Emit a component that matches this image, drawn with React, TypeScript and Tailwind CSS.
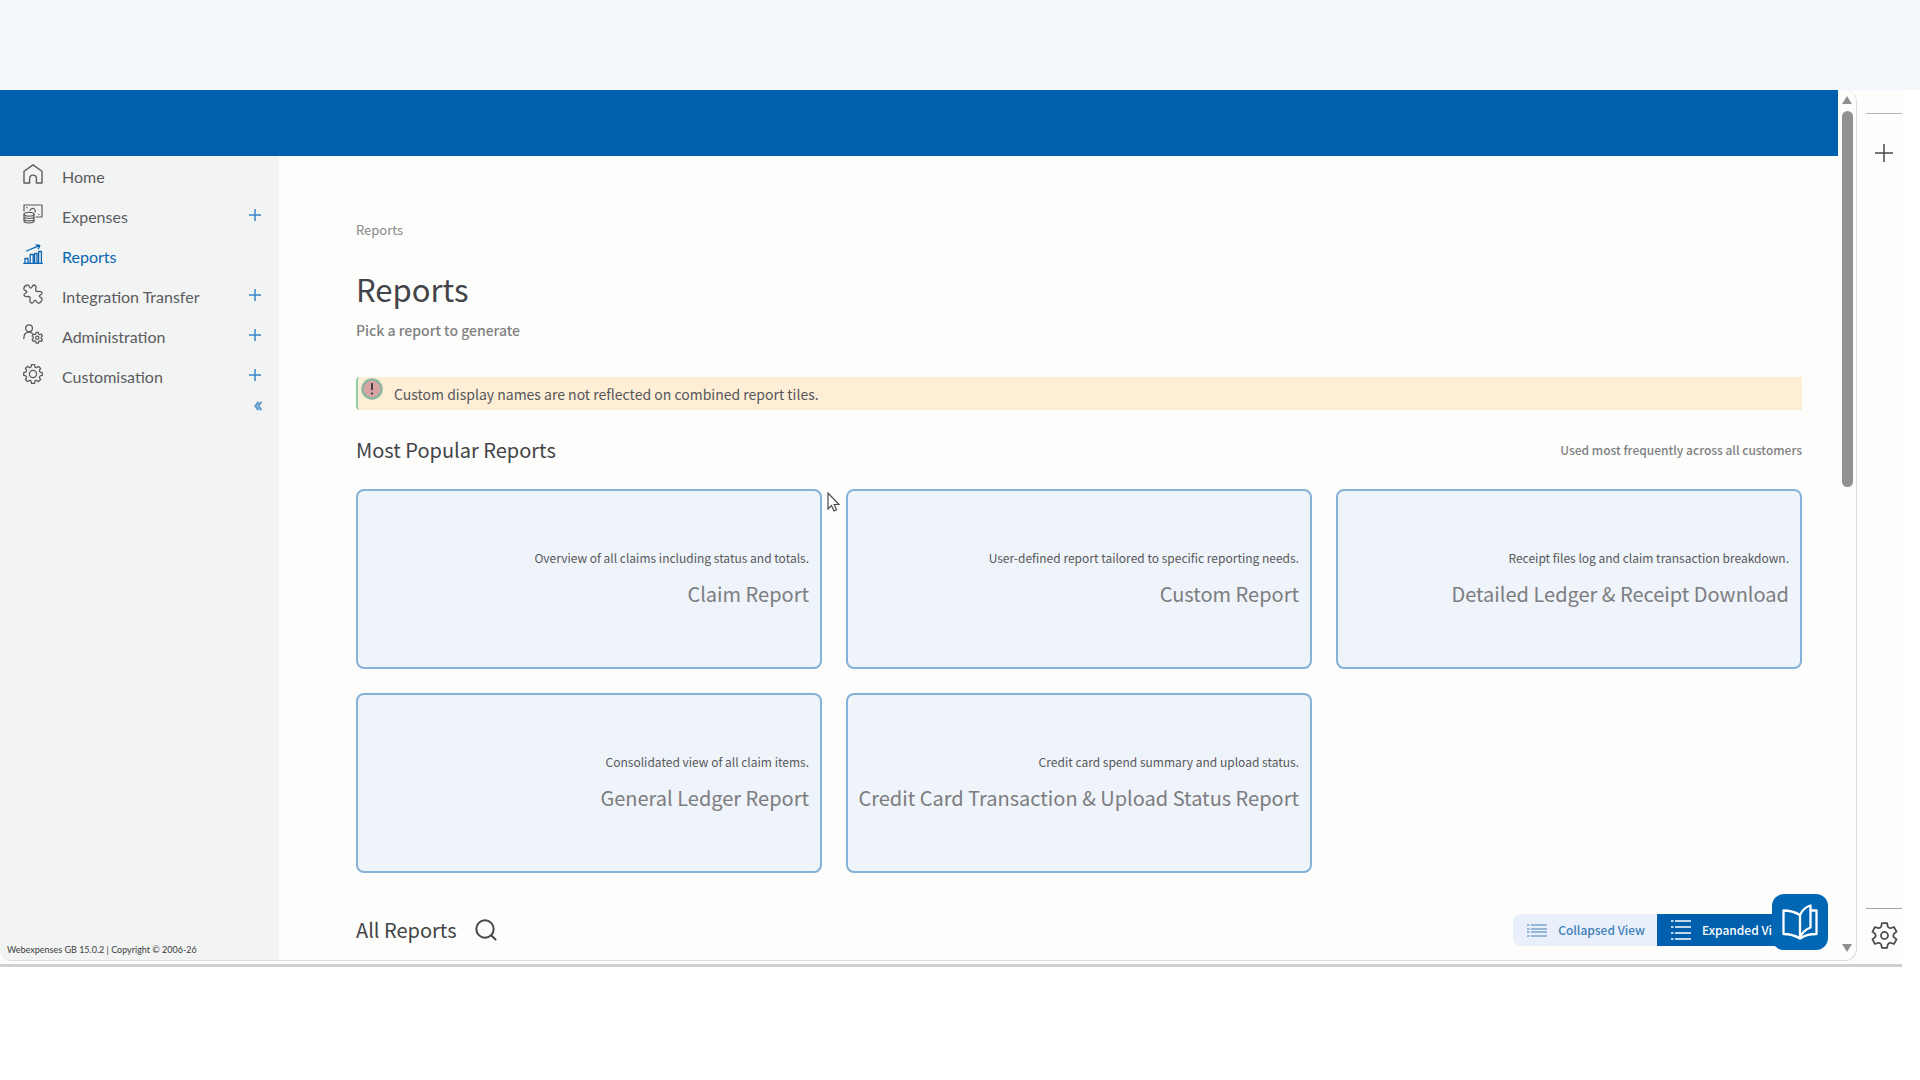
import React from "react";

const stroke = { fill: "none", stroke: "currentColor", strokeWidth: 1.4, strokeLinecap: "round", strokeLinejoin: "round" } as const;

function gearPath(teeth: number, outer: number, inner: number) {
  const step = (Math.PI * 2) / teeth;
  const point = (radius: number, angle: number) =>
    `${(10 + radius * Math.sin(angle)).toFixed(2)} ${(10 - radius * Math.cos(angle)).toFixed(2)}`;
  const parts: string[] = [];
  for (let i = 0; i < teeth; i++) {
    const a = i * step;
    parts.push(
      `${i === 0 ? "M" : "L"}${point(outer, a - step * 0.2)}L${point(outer, a + step * 0.2)}L${point(inner, a + step * 0.34)}Q${point(inner - 0.8, a + step * 0.5)} ${point(inner, a + step * 0.66)}`,
    );
  }
  return parts.join("") + "Z";
}

const GEAR_8 = gearPath(8, 9.4, 7.4);
const GEAR_6 = gearPath(6, 9.4, 7);

function HomeIcon() {
  return (
    <svg viewBox="0 0 20 20" className="size-5" {...stroke}>
      <path d="M1 19V7.2L10 .9l9 6.3V19h-5.600v-4.500a3.400 3.400 0 0 0-6.800 0V19Z" />
    </svg>
  );
}

function ExpensesIcon() {
  return (
    <svg viewBox="0 0 20 20" className="size-5" {...stroke} strokeWidth={1.2}>
      <path d="M1 7V1h18v12h-6M7 6.500C7.500 4.800 9 4 10.500 4.500s2.200 2 1.500 3.500M3.500 3.700h.5M15.500 10.500h.5" />
      <ellipse cx="6" cy="10.300" rx="5" ry="1.900" />
      <path d="M1 10.300v6.800c0 1 2.200 1.900 5 1.900s5-.9 5-1.900v-6.800M1 12.600c0 1 2.200 1.900 5 1.900s5-.9 5-1.900M1 14.900c0 1 2.200 1.900 5 1.900s5-.9 5-1.900" />
    </svg>
  );
}

function ReportsIcon() {
  return (
    <svg viewBox="0 0 20 20" className="size-5" {...stroke} strokeWidth={1.3}>
      <path d="M.7 19.300h18.600M2 19v-4.500h3V19M7.200 19v-8.500h3V19M11.600 19V9.500h2.400V19M15.600 19V7.500h2.800V19M3.500 7 16.300 1.600M13 .8l3.800.6-1.500 3.400" />
    </svg>
  );
}

function PuzzleIcon() {
  return (
    <svg viewBox="0 0 20 20" className="size-5" {...stroke} strokeWidth={1.3}>
      <path d="M4.500 1C6.500.5 6 3.600 7.500 4 9.300 4.300 9 1.300 11 1c1.800 0 2.400 2 1.800 3.600-.6 2 .2 3 1.900 2.900 2-.1 4.400-.3 4.300 1.800-.1 1.900-2.500 1.200-2.700 2.700-.1 1.500 2.900 1.200 2.800 3.300-.1 2-2 3.800-4 3.700-2.100-.1-1.300-2.900-2.900-2.900-1.700 0-1.200 3-3.300 2.900-1.800-.1-2.400-1.900-1.900-3.600.5-1.700 0-2.900-1.800-2.900-2 .1-4.200.2-4.200-1.700 0-1.800 2.700-1.300 2.800-2.800.1-1.600-3-1.100-3-3.300C1 3 2.500 1.400 4.500 1Z" />
    </svg>
  );
}

function GearIcon() {
  return (
    <svg viewBox="0 0 20 20" className="size-5" {...stroke} strokeWidth={1.3}>
      <path d={GEAR_8} />
      <circle cx="10" cy="10" r="3.600" />
    </svg>
  );
}

function AdminIcon() {
  return (
    <svg viewBox="0 0 20 20" className="size-5" {...stroke} strokeWidth={1.3}>
      <circle cx="6" cy="4.200" r="3.400" />
      <path d="M.8 14.500c0-4 2-6.300 5.200-6.300 1.400 0 2.500.4 3.300 1.200" />
      <g transform="translate(8.500 8) scale(.58)" strokeWidth={2.2}>
        <path d={GEAR_6} />
        <circle cx="10" cy="10" r="2.800" />
      </g>
    </svg>
  );
}

function ListIcon({ className, dense }: { className: string; dense?: boolean }) {
  const rows = dense ? [1, 5, 8, 12] : [1, 7, 13, 19];
  return (
    <svg viewBox={dense ? "0 0 20 13" : "0 0 20 20"} className={className} fill="none" stroke="currentColor" strokeWidth={dense ? 1.2 : 1.5}>
      {rows.map((y) => (
        <path key={y} d={`M0 ${y}h2.500M4 ${y}h16`} />
      ))}
    </svg>
  );
}

const NAV = [
  { label: "Home", icon: <HomeIcon />, expandable: false },
  { label: "Expenses", icon: <ExpensesIcon />, expandable: true },
  { label: "Reports", icon: <ReportsIcon />, expandable: false, active: true },
  { label: "Integration Transfer", icon: <PuzzleIcon />, expandable: true },
  { label: "Administration", icon: <AdminIcon />, expandable: true },
  { label: "Customisation", icon: <GearIcon />, expandable: true },
];

const REPORTS = [
  { title: "Claim Report", text: "Overview of all claims including status and totals." },
  { title: "Custom Report", text: "User-defined report tailored to specific reporting needs." },
  { title: "Detailed Ledger & Receipt Download", text: "Receipt files log and claim transaction breakdown." },
  { title: "General Ledger Report", text: "Consolidated view of all claim items." },
  { title: "Credit Card Transaction & Upload Status Report", text: "Credit card spend summary and upload status." },
];

function Sidebar() {
  return (
    <aside className="flex w-[279px] shrink-0 flex-col bg-[#f2f3f3] font-['Lato',sans-serif] text-[#5b5c5f]">
      <nav>
        <ul>
          {NAV.map((item) => (
            <li key={item.label} className="flex h-10 items-center pr-[18px] pl-[23px]">
              <a href="#" className={item.active ? "flex flex-1 items-center gap-[19px] text-[#0b66b1]" : "flex flex-1 items-center gap-[19px]"}>
                <span className="pb-1">{item.icon}</span>
                <span className="pt-0.5 text-base leading-6">{item.label}</span>
              </a>
              {item.expandable && (
                <button aria-label={`Expand ${item.label}`} className="pb-0.5 text-[#3a86c4]">
                  <svg viewBox="0 0 12 12" className="size-3" fill="none" stroke="currentColor" strokeWidth="1.500">
                    <path d="M6 0v12M0 6h12" />
                  </svg>
                </button>
              )}
            </li>
          ))}
        </ul>
      </nav>
      <button aria-label="Collapse menu" className="mt-[5px] mr-[17px] self-end text-[#5a97cb]">
        <svg viewBox="0 0 8 10" className="h-[10px] w-2" fill="none" stroke="currentColor" strokeWidth="2">
          <path d="M4.500 .8 1.400 5l3.100 4.200M7.500 .8 4.400 5l3.100 4.200" />
        </svg>
      </button>
      <p className="mt-auto pb-0.5 pl-[7px] text-[9px] leading-4 text-[#3c3d40]">Webexpenses GB 15.0.2 | Copyright © 2006-26</p>
    </aside>
  );
}

export default function App() {
  return (
    <div className="min-h-screen bg-white font-['Noto_Sans_CJK_SC',sans-serif]">
      <div className="h-[90px] bg-[#f3f6fb]" />
      <div className="mr-[18px] flex border-b-3 border-[#cfd0d1] bg-[#fdfdfb] pb-[3px]">
        <div className="flex min-w-0 flex-1 overflow-hidden rounded-b-xl rounded-tr-xl border-r border-b border-[#dcdcdc]">
          <div className="flex min-w-0 flex-1 flex-col">
            <header className="h-[66px] bg-[#0060ae]" />
            <div className="flex flex-1">
              <Sidebar />
              <main className="min-w-0 flex-1 pt-16 pr-9 pl-[77px] text-[#434448]">
                <nav aria-label="Breadcrumb" className="text-[13px] leading-5 text-[#87888a]">
                  <a href="#">Reports</a>
                </nav>
                <h1 className="mt-7 text-[31px] leading-[42px]">Reports</h1>
                <p className="mt-2.5 text-sm leading-5 font-medium text-[#808183]">Pick a report to generate</p>
                <div role="alert" className="relative mt-[37px] flex h-[33px] items-center rounded-l border-l-2 border-[#8ccfa6] bg-[#fdeed5] pl-9 text-sm text-[#56575b]">
                  <svg viewBox="0 0 22 22" className="absolute top-px left-[3px] size-[22px]">
                    <circle cx="11" cy="11" r="9.500" fill="#d9a3a3" stroke="#8db7a1" strokeWidth="2.500" />
                    <path d="M11 5v7M11 14.500v2" stroke="#46434a" strokeWidth="2" />
                  </svg>
                  Custom display names are not reflected on combined report tiles.
                </div>
                <div className="mt-6 flex h-8 items-center justify-between">
                  <h2 className="text-xl">Most Popular Reports</h2>
                  <p className="text-xs font-medium text-[#808183]">Used most frequently across all customers</p>
                </div>
                <div className="relative mt-[23px] grid grid-cols-3 gap-6">
                  {REPORTS.map((r) => (
                    <a key={r.title} href="#" className="flex h-[180px] flex-col items-end justify-center rounded-lg border-2 border-[#85b2d9] bg-[#eff3fa] px-[11px] text-right">
                      <span className="text-xs leading-5 text-[#57585b]">{r.text}</span>
                      <span className="mt-2.5 text-xl leading-8 whitespace-nowrap text-[#7c7d7f]">{r.title}</span>
                    </a>
                  ))}
                  <svg viewBox="0 0 14 20" className="absolute top-[3px] left-[471px] h-5 w-[14px]" fill="#fff" stroke="#4c4c4c" strokeWidth="1.200">
                    <path d="M1 1v16l3.500-3.500 2.500 5.500 2.500-1.200-2.300-5.300H12Z" />
                  </svg>
                </div>
                <div className="mt-[41px] mb-[14px] flex h-8 items-center">
                  <h2 className="text-xl">All Reports</h2>
                  <button aria-label="Search reports" className="ml-[18px]">
                    <svg viewBox="0 0 22 22" className="size-[22px]" {...stroke} strokeWidth={2}>
                      <circle cx="10" cy="10" r="8.700" />
                      <path d="m16.500 16.500 4 4" />
                    </svg>
                  </button>
                  <div className="relative ml-auto flex h-8 text-xs font-medium">
                    <button className="flex items-center gap-[11px] rounded-l-lg bg-[#eaf0fb] pr-3 pl-[14px] text-[#4080b8]">
                      <ListIcon dense className="h-[13px] w-5" />
                      Collapsed View
                    </button>
                    <button className="flex w-[145px] items-center gap-[11px] overflow-hidden rounded-r-lg bg-[#0060ae] pl-[14px] whitespace-nowrap text-white">
                      <ListIcon className="size-5 shrink-0" />
                      Expanded View
                    </button>
                    <button aria-label="Open guide" className="absolute -top-5 -right-[26px] flex size-14 items-center justify-center rounded-xl bg-[#0067b5] text-white">
                      <svg viewBox="0 0 36 36" className="size-9" {...stroke} strokeWidth={2.3}>
                        <path d="M18 34.500C13 31.500 8 30 1.500 30V6.500C8 6.500 13 8 18 11v23.500c4-3 9-4.500 16.500-4.500V6.500H28.500" />
                        <path d="M18 11c2-4.500 5.500-8 10.500-9.500v22C23.500 25.500 20 29 18 33" />
                      </svg>
                    </button>
                  </div>
                </div>
              </main>
            </div>
          </div>
          <div aria-hidden="true" className="flex w-[18px] flex-col items-center pt-[6px] pb-2">
            <svg viewBox="0 0 10 8" className="h-2 w-[10px]" fill="#909090"><path d="M5 0 10 8H0Z" /></svg>
            <div className="mt-[7px] h-[376px] w-[11px] rounded-full bg-[#919191]" />
            <svg viewBox="0 0 10 8" className="mt-auto h-2 w-[10px]" fill="#909090"><path d="M0 0h10L5 8Z" /></svg>
          </div>
        </div>
        <div className="flex w-[45px] flex-col pt-[23px] pl-[9px] text-[#4a4a4a]">
          <button aria-label="Add" className="flex h-[79px] items-center justify-center border-t border-[#b5b5b5]">
            <svg viewBox="0 0 18 18" className="size-[18px]" fill="none" stroke="currentColor" strokeWidth="1.500"><path d="M9 0v18M0 9h18" /></svg>
          </button>
          <button aria-label="Settings" className="mt-auto flex h-[53px] items-center justify-center border-t border-[#a5a5a5]">
            <svg viewBox="0 0 20 20" className="size-[27px]" {...stroke} strokeWidth={1.3}>
              <path d={GEAR_6} />
              <circle cx="10" cy="10" r="2.600" />
            </svg>
          </button>
        </div>
      </div>
    </div>
  );
}
